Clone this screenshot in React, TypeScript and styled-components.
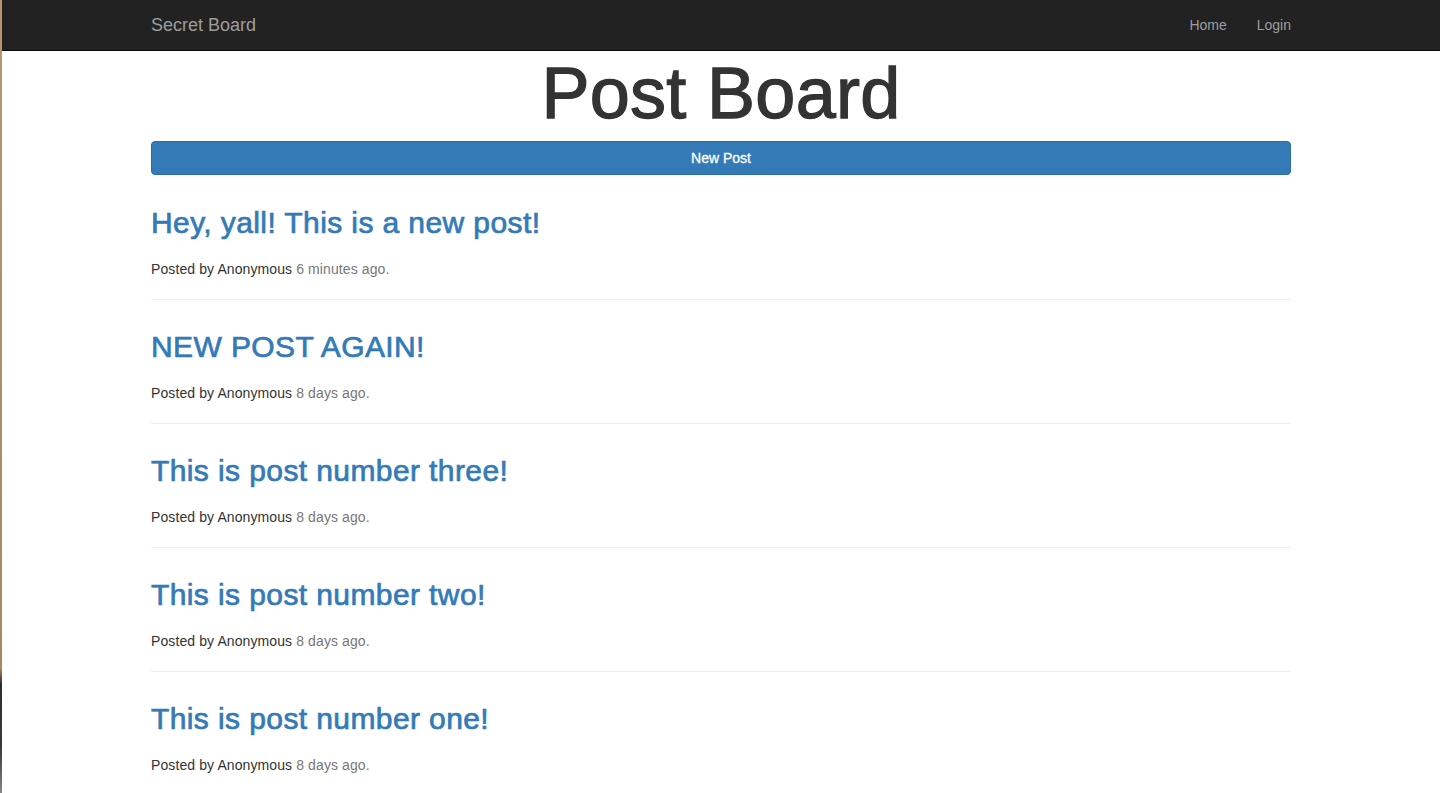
import * as React from 'react';
import styled, { createGlobalStyle } from 'styled-components';

const GlobalStyle = createGlobalStyle`
  html {
    background: linear-gradient(
      to bottom,
      #b8976f 0%,
      #a8885f 84%,
      #2b2b30 86%,
      #3a3a40 94%,
      #8a8a90 100%
    );
    background-repeat: no-repeat;
    background-size: 2px 100%;
    min-height: 100%;
  }
  body {
    margin: 0 0 0 2px;
    min-height: 793px;
    background: #fff;
    font-family: 'Liberation Sans', Arial, Helvetica, sans-serif;
    font-size: 14px;
    line-height: 20px;
    color: #333;
  }
  * {
    box-sizing: border-box;
  }
`;

const Navbar = styled.nav`
  height: 51px;
  background: #222;
  border-bottom: 1px solid #080808;
`;

const Container = styled.div`
  width: 1170px;
  margin: 0 auto;
  padding: 0 15px;
`;

const NavInner = styled(Container)`
  display: flex;
  justify-content: space-between;
  align-items: flex-start;
  height: 50px;
`;

const Brand = styled.a`
  margin-left: -15px;
  padding: 15px;
  height: 50px;
  font-size: 18px;
  line-height: 20px;
  color: #9d9d9d;
  text-decoration: none;
`;

const NavList = styled.ul`
  display: flex;
  list-style: none;
  margin: 0 -15px 0 0;
  padding: 0;
`;

const NavLink = styled.a`
  display: block;
  padding: 15px;
  line-height: 20px;
  color: #9d9d9d;
  text-decoration: none;
`;

const PageTitle = styled.h1`
  margin: 3px 0 8px;
  font-size: 72px;
  line-height: 79px;
  font-weight: 400;
  letter-spacing: 0.3px;
  -webkit-text-stroke: 1.3px #333;
  text-align: center;
  color: #333;
`;

const NewPostButton = styled.button`
  display: block;
  width: 100%;
  height: 34px;
  margin: 0 0 1px;
  padding: 6px 12px;
  font-family: inherit;
  font-size: 14px;
  line-height: 20px;
  color: #fff;
  -webkit-text-stroke: 0.3px #fff;
  background: #337ab7;
  border: 1px solid #2e6da4;
  border-radius: 4px;
  cursor: pointer;
`;

const PostItem = styled.article`
  padding-top: 30px;
`;

const PostTitle = styled.h2`
  margin: 0 0 20px;
  font-size: 30px;
  line-height: 33px;
  font-weight: 400;
  letter-spacing: 0.4px;

  a {
    color: #337ab7;
    -webkit-text-stroke: 0.7px #337ab7;
    text-decoration: none;
  }
`;

const PostMeta = styled.p`
  margin: 0;
  letter-spacing: 0.1px;
  color: #333;
`;

const TimeAgo = styled.span`
  color: #777;
`;

const Divider = styled.hr`
  margin: 20px 0 0;
  border: 0;
  border-top: 1px solid #eee;
`;

const posts = [
  { title: 'Hey, yall! This is a new post!', author: 'Anonymous', ago: '6 minutes ago.' },
  { title: 'NEW POST AGAIN!', author: 'Anonymous', ago: '8 days ago.' },
  { title: 'This is post number three!', author: 'Anonymous', ago: '8 days ago.' },
  { title: 'This is post number two!', author: 'Anonymous', ago: '8 days ago.' },
  { title: 'This is post number one!', author: 'Anonymous', ago: '8 days ago.' },
];

const App = () => {
  return (
    <>
      <GlobalStyle />
      <Navbar>
        <NavInner>
          <Brand href="#">Secret Board</Brand>
          <NavList>
            <li>
              <NavLink href="#">Home</NavLink>
            </li>
            <li>
              <NavLink href="#">Login</NavLink>
            </li>
          </NavList>
        </NavInner>
      </Navbar>
      <Container>
        <PageTitle>Post Board</PageTitle>
        <NewPostButton>New Post</NewPostButton>
        {posts.map(post => (
          <PostItem key={post.title}>
            <PostTitle>
              <a href="#">{post.title}</a>
            </PostTitle>
            <PostMeta>
              Posted by {post.author} <TimeAgo>{post.ago}</TimeAgo>
            </PostMeta>
            <Divider />
          </PostItem>
        ))}
      </Container>
    </>
  );
};

export default App;
